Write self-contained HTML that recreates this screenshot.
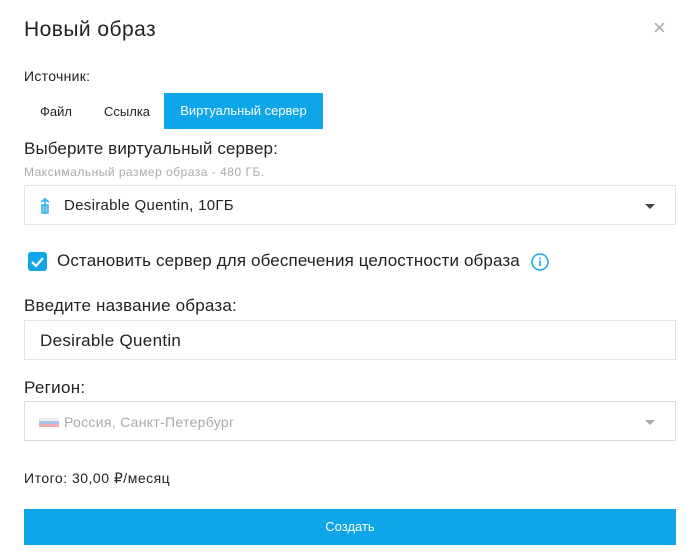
<!DOCTYPE html>
<html><head><meta charset="utf-8"><style>
*{box-sizing:border-box;margin:0;padding:0}
body{width:700px;height:559px;background:#fff;font-family:"Liberation Sans","DejaVu Sans",sans-serif;color:#222;position:relative;overflow:hidden}
.a{position:absolute}
.box{position:absolute;left:24px;width:652px;border:1px solid #e3e3e3;background:#fff}
.caret{position:absolute;right:20px;width:0;height:0;border-left:5px solid transparent;border-right:5px solid transparent;border-top:5px solid #444}
</style></head><body>
<div class="a" style="left:24px;top:18px;font-size:21px;color:#222;letter-spacing:0.45px">Новый образ</div>
<div class="a" style="left:653px;top:15px;font-size:22px;color:#aaa">×</div>
<div class="a" style="left:24px;top:68px;font-size:14px;letter-spacing:0.3px">Источник:</div>
<div class="a" style="left:40px;top:104px;font-size:13px">Файл</div>
<div class="a" style="left:104px;top:104px;font-size:13px">Ссылка</div>
<div class="a" style="left:164px;top:93px;width:159px;height:36px;background:#0ea5e9;color:#fff;font-size:13px;line-height:36px;text-align:center">Виртуальный сервер</div>
<div class="a" style="left:24px;top:139px;font-size:17px;letter-spacing:0.1px">Выберите виртуальный сервер:</div>
<div class="a" style="left:24px;top:165px;font-size:12px;color:#aaa;letter-spacing:0.5px">Максимальный размер образа - 480 ГБ.</div>
<div class="box" style="top:185px;height:40px">
<svg class="a" style="left:14px;top:11px" width="12" height="18" viewBox="0 0 12 18"><path d="M6 1v16M2 5l4-3 4 3M3 8h6v8H3z" stroke="#36b5e8" stroke-width="1.6" fill="#9fdcf4"/></svg>
<div class="a" style="left:39px;top:11px;font-size:15px;letter-spacing:0.3px">Desirable Quentin, 10ГБ</div>
<div class="caret" style="top:18px"></div></div>
<div class="a" style="left:28px;top:252px;width:19px;height:19px;background:#0ea5e9;border-radius:3px">
<svg width="19" height="19"><path d="M4 10l4 4 7-8" stroke="#fff" stroke-width="2.2" fill="none"/></svg></div>
<div class="a" style="left:57px;top:251px;font-size:17px;letter-spacing:0.13px">Остановить сервер для обеспечения целостности образа</div>
<svg class="a" style="left:530px;top:252px" width="20" height="20"><circle cx="10" cy="10" r="8" stroke="#0ea5e9" stroke-width="1.5" fill="none"/><rect x="9.2" y="8.5" width="1.6" height="5.5" fill="#0ea5e9"/><rect x="9.2" y="5.5" width="1.6" height="1.8" fill="#0ea5e9"/></svg>
<div class="a" style="left:24px;top:296px;font-size:17px;letter-spacing:0.2px">Введите название образа:</div>
<div class="box" style="top:320px;height:40px"><div class="a" style="left:15px;top:10px;font-size:17px;letter-spacing:0.3px">Desirable Quentin</div></div>
<div class="a" style="left:24px;top:378px;font-size:17px;letter-spacing:0.3px">Регион:</div>
<div class="box" style="top:401px;height:40px;border-color:#ddd">
<div class="a" style="left:14px;top:16px;width:20px;height:3px;background:#eee"></div>
<div class="a" style="left:14px;top:19px;width:20px;height:3px;background:#a9c4ea"></div>
<div class="a" style="left:14px;top:22px;width:20px;height:3px;background:#eeadb2"></div>
<div class="a" style="left:39px;top:12px;font-size:14px;color:#aaa;letter-spacing:0.3px">Россия, Санкт-Петербург</div>
<div class="caret" style="top:18px;border-top-color:#aaa"></div></div>
<div class="a" style="left:24px;top:470px;font-size:14px;letter-spacing:0.5px">Итого: 30,00 ₽/месяц</div>
<div class="a" style="left:24px;top:509px;width:652px;height:36px;background:#0ea5e9;color:#fff;font-size:13px;line-height:36px;text-align:center">Создать</div>
</body></html>
